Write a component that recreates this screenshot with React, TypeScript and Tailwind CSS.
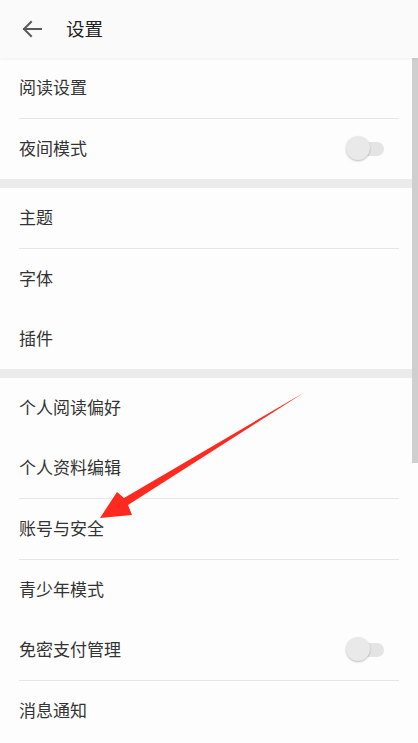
import React from "react";

type Row = { label: string; toggle?: boolean; divider?: boolean };

const sections: Row[][] = [
  [
    { label: "阅读设置", divider: true },
    { label: "夜间模式", toggle: true },
  ],
  [
    { label: "主题", divider: true },
    { label: "字体" },
    { label: "插件" },
  ],
  [
    { label: "个人阅读偏好" },
    { label: "个人资料编辑", divider: true },
    { label: "账号与安全", divider: true },
    { label: "青少年模式" },
    { label: "免密支付管理", toggle: true, divider: true },
    { label: "消息通知" },
  ],
];

function Toggle() {
  return (
    <div className="relative w-[38px] h-[25px] flex items-center mt-[2px]">
      <div className="absolute left-[3px] right-0 h-[14px] rounded-full bg-[#e4e4e4]" />
      <div className="absolute left-0 top-0 w-[24px] h-[24px] rounded-full bg-[#e9e9e9] shadow-[0_1px_2px_rgba(0,0,0,0.25)]" />
    </div>
  );
}

export default function App() {
  return (
    <div
      className="relative w-[418px] h-[743px] overflow-hidden bg-[#fdfdfd] text-[#333]"
      style={{ fontFamily: '"Noto Sans CJK SC", "Noto Sans", sans-serif' }}
    >
      <div className="relative z-10 h-[58px] bg-[#fafafa] flex items-center shadow-[0_1px_3px_rgba(0,0,0,0.06)]">
        <svg width="22" height="18" viewBox="0 0 22 18" className="ml-[21px]">
          <path d="M20 9H3M10 2L3 9l7 7" fill="none" stroke="#5a5a5a" strokeWidth="2" strokeLinecap="square" />
        </svg>
        <span className="ml-[23px] pb-[2px] text-[18.5px] text-[#222] leading-none">设置</span>
      </div>
      <div className="flex flex-col">
        {sections.map((sec, si) => (
          <div key={si} className="flex flex-col">
            {si > 0 && <div className="h-[9px] bg-[#ebebeb]" />}
            {sec.map((r, ri) => (
              <div key={ri} className="flex flex-col">
                <div className="h-[60px] flex items-center justify-between pl-[19px] pr-[34px] pb-[3px]">
                  <span className="text-[17px] leading-none text-[#333]">{r.label}</span>
                  {r.toggle && <Toggle />}
                </div>
                {r.divider && <div className="ml-[19px] mr-[19px] h-px bg-[#e6e6e6]" />}
              </div>
            ))}
          </div>
        ))}
      </div>
      <div className="absolute right-0 top-[58px] w-[6px] h-[405px] bg-[#cfcfcf]" />
      <svg className="absolute left-0 top-0 pointer-events-none" width="418" height="743">
        <polygon
          points="305,392 128,505 132,515 100,518 117,492 124,498"
          fill="#ff2a1f"
        />
      </svg>
    </div>
  );
}
